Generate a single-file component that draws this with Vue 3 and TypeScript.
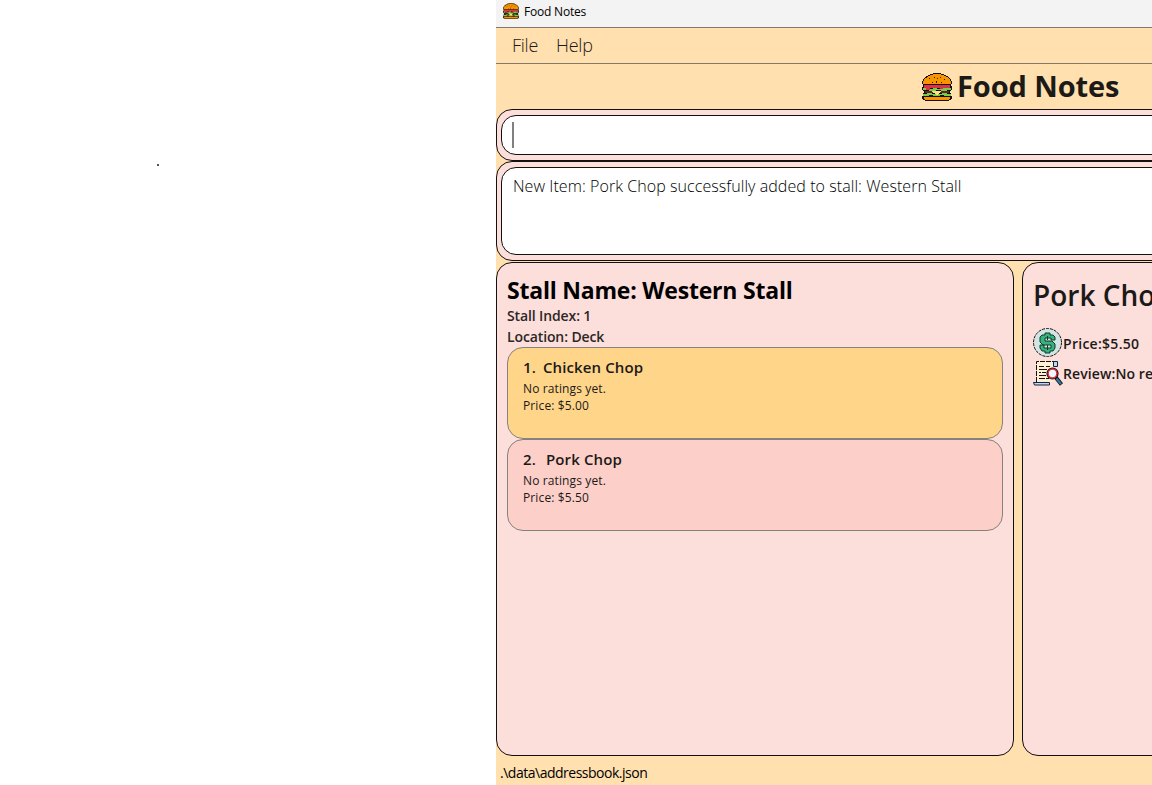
<script setup lang="ts">
interface Item { index: number; name: string; price: string; selected: boolean }
const items: Item[] = [
  { index: 1, name: 'Chicken Chop', price: '$5.00', selected: true },
  { index: 2, name: 'Pork Chop', price: '$5.50', selected: false },
]
</script>

<template>
  <div class="desktop">
    <div class="margin-area"><span class="dot"></span></div>
    <div class="window">
      <svg class="defs" width="0" height="0">
        <symbol id="burger" viewBox="0 0 30 28" preserveAspectRatio="none">
          <path d="M0 11V8H1V6H2V5H3V4H4V3H6V2H8V1H11V0H19V1H22V2H24V3H26V4H27V5H28V6H29V8H30V11H29V13H30V17H29V18H28V20H29V23H30V26H29V27H27V28H3V27H1V26H0V23H1V20H2V18H1V17H0V14H1V11Z" fill="#15120c" />
          <path d="M1 11V8H2V6H3V5H5V4H6V3H8V2H11V1H19V2H22V3H24V4H26V5H27V6H28V8H29V11Z" fill="#f79400" />
          <path d="M2 24H28V26H27V27H3V26H2Z" fill="#f79400" />
          <path d="M2 12H28V15H22V16H18V15H8V17H4V15H2Z" fill="#df3145" />
          <path d="M1 15H4V17H8V16H11V15H15V16H21V15H29V17H25V18H19V17H14V18H7V17H1Z" fill="#78cb50" />
          <path d="M3 18H27V20H3Z" fill="#5e261c" />
          <path d="M1 21H5V20H10V21H20V20H25V21H29V23H22V22H18V23H11V22H7V23H1Z" fill="#78cb50" />
          <path d="M10 18H19V19H18V20H17V21H16V22H14V21H13V20H11V19H10Z" fill="#ffe27a" />
          <path d="M7 5h1v1h-1zM12 4h1v1h-1zM18 4h1v1h-1zM15 5h1v1h-1zM22 6h1v1h-1zM10 9h1v1h-1zM14 8h1v2h-1zM19 9h1v1h-1z" fill="#29200c" />
        </symbol>
      </svg>
      <header class="titlebar"><svg class="small-burger"><use href="#burger" /></svg><span>Food Notes</span></header>
      <nav class="menu"><span class="file">File</span><span class="help">Help</span></nav>
      <div class="brand"><svg class="big-burger" shape-rendering="crispEdges"><use href="#burger" /></svg><h1>Food Notes</h1></div>
      <section class="pane command"><div class="field"><i class="caret"></i></div></section>
      <section class="pane result"><div class="field"><span>New Item: Pork Chop successfully added to stall: Western Stall</span></div></section>
      <main class="content">
        <section class="panel stall">
          <h2><span>Stall Name: Western Stall</span></h2>
          <p class="meta"><span>Stall Index: 1</span></p>
          <p class="meta"><span>Location: Deck</span></p>
          <article v-for="item in items" :key="item.index" class="card" :class="{ selected: item.selected }">
            <h3><span class="num">{{ item.index }}.</span><span>{{ item.name }}</span></h3>
            <p><span>No ratings yet.</span></p>
            <p><span>Price: {{ item.price }}</span></p>
          </article>
        </section>
        <section class="panel detail">
          <h2>Pork Chop</h2>
          <div class="row">
            <svg width="30" height="30" viewBox="0 0 30 30">
              <circle cx="14.500" cy="14.500" r="14" fill="#d2e4e3" stroke="#111" stroke-dasharray="3 1" />
              <path d="M12 5H17V7H20L22 9V12H18V10H12V13H19L22 16V20L20 23H17V25H12V23H9L7 20V17H11V20H18V17H10L7 14V9L9 7H12Z" fill="#35b37e" stroke="#15382b" />
              <path d="M14.500 8V12M14.500 17V22" stroke="#15382b" />
            </svg><span>Price:$5.50</span>
          </div>
          <div class="row">
            <svg width="30" height="30" viewBox="0 0 30 30">
              <path d="M3.500 3.500H21V24H3.500Z" fill="#fff0d5" />
              <path d="M3.500 24V3.500H21" fill="none" stroke="#15120c" stroke-dasharray="5 1" />
              <path d="M20.500 3.500H24.500V8.500H20.500Z" fill="#bdd8f5" stroke="#15233a" />
              <path d="M0.500 24.500H16.500V27H1.500Z" fill="#bdd8f5" stroke="#15233a" />
              <path d="M6 8.500H11M13 8.500H17M6 11.500H14M6 14.500H8M9 14.500H13M6 17.500H13M6 20.500H12M13 20.500H16" stroke="#15120c" fill="none" />
              <path d="M22.500 19L28.500 26.500" stroke="#10151b" stroke-width="4" />
              <path d="M23.500 20.500L28 26" stroke="#347bab" stroke-width="2" />
              <circle cx="19.500" cy="15.500" r="4.800" fill="#eef6ff" stroke="#15120c" stroke-width="2.600" />
              <circle cx="19.500" cy="15.500" r="4.400" fill="#eef6ff" stroke="#df3145" stroke-width="1.500" />
            </svg><span class="review">Review:No reviews yet.</span>
          </div>
        </section>
      </main>
      <footer><span>.\data\addressbook.json</span></footer>
    </div>
  </div>
</template>

<style>
body { overflow: hidden; }
</style>
<style scoped>
* { box-sizing: border-box; }
.desktop { display: flex; width: 1152px; height: 785px; overflow: hidden; background: #fff; font-family: "Open Sans", "Noto Sans", sans-serif; color: #1c1a17; white-space: nowrap; }
.margin-area { width: 496px; flex: none; padding: 164px 0 0 157px; }
.dot { display: block; width: 2px; height: 2px; background: #555; }
.window { width: 656px; height: 785px; flex: none; display: flex; flex-direction: column; background: #ffe0ae; overflow: hidden; }
.defs { display: block; flex: none; }
h1, h2, h3, p { margin: 0; }
.titlebar { height: 27px; flex: none; background: #f3f3f3; display: flex; align-items: flex-start; padding: 3px 0 0 7px; font-size: 12px; line-height: 18px; letter-spacing: -0.2px; color: #000; }
.small-burger { width: 16px; height: 16px; margin-right: 5px; }
.menu { height: 37px; flex: none; border-top: 1px solid #82796b; border-bottom: 1px solid #82796b; padding-left: 16px; display: flex; font-size: 18px; line-height: 34px; letter-spacing: -0.25px; font-weight: 300; }
.file { width: 44px; }
.brand { height: 45px; flex: none; padding-left: 426px; display: flex; align-items: flex-start; }
.big-burger { width: 30px; height: 28px; margin: 9px 5px 0 0; }
h1 { font-size: 29px; line-height: 44px; letter-spacing: -0.1px; font-weight: 700; }
.pane { flex: none; width: 700px; border: 1px solid #111; border-radius: 16px; background: #fcdedb; padding: 5px 4px; }
.command { height: 52px; }
.result { height: 100px; }
.field { height: 100%; border: 1px solid #111; border-radius: 15px; background: #fff; padding: 6px 11px; font-size: 16px; line-height: 26px; font-weight: 300; color: #111; }
.result .field { padding-top: 5px; letter-spacing: 0.07px; color: #000; }
.command .field { padding-left: 10px; }
.caret { display: block; width: 2px; height: 26px; background: #808080; }
.content { display: flex; gap: 8px; flex: none; height: 495px; padding-top: 1px; }
.panel { border: 1px solid #111; border-radius: 16px; background: #fcdedb; height: 494px; flex: none; }
.stall { width: 518px; padding: 11px 10px; }
.stall h2 { font-size: 23px; line-height: 32px; letter-spacing: -0.21px; color: #000; height: 31px; }
.meta { font-size: 14px; line-height: 21px; letter-spacing: -0.12px; height: 21px; font-weight: 600; color: #2b2725; }
.card { height: 92px; border: 1px solid #85817c; border-radius: 16px; background: #fccfc9; padding: 8px 15px; }
.card.selected { background: #ffd58a; }
h3 { display: flex; font-size: 15px; line-height: 22px; height: 24px; font-weight: 600; letter-spacing: 0.12px; }
.num { margin-right: 10px; }
.card.selected .num { margin-right: 7px; }
.card p { font-size: 12px; line-height: 17px; letter-spacing: 0.12px; }
.detail { width: 500px; padding: 11px 10px; }
.detail h2 { font-size: 28px; line-height: 42px; height: 54px; font-weight: 600; }
.row { display: flex; height: 30px; line-height: 31px; font-size: 14px; letter-spacing: 0.28px; font-weight: 600; }
.row svg { flex: none; }
.review { letter-spacing: 0.1px; }
footer { flex: 1; padding-left: 4px; font-size: 14px; line-height: 33px; letter-spacing: -0.49px; color: #000; }
</style>
